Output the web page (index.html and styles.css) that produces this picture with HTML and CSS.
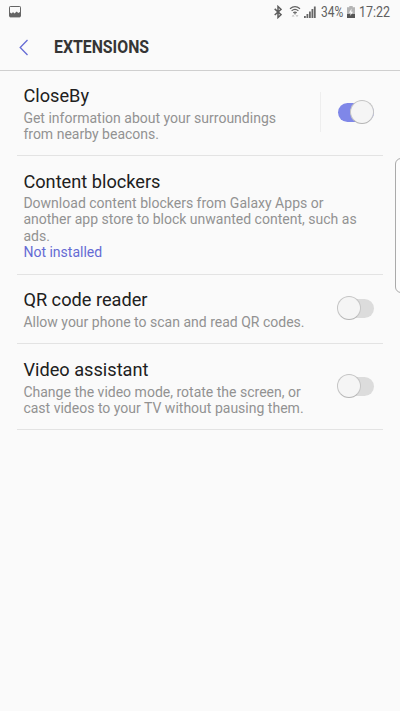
FILE: index.html
```html
<!DOCTYPE html>
<html lang="en">
<head>
<meta charset="utf-8">
<title>Extensions</title>
<link rel="stylesheet" href="styles.css">
</head>
<body>
<div class="status">
  <svg class="picture" width="12" height="12" viewBox="0 0 12 12"><rect x=".5" y=".5" width="11" height="10.4" rx=".7" fill="none" stroke="#656565"/><path d="M1 6.5L2.8 7.5 4 6l1.4 1.4L7.8 5.5l1.4 1.4L11 6v5H1z" fill="#656565"/></svg>
  <div class="indicators">
    <svg class="bluetooth" width="8" height="14" viewBox="0 0 8 14"><path d="M.7 3.9l6.3 5.8L4 12.5v-11l3 2.8L.7 10" fill="none" stroke="#5d5d5d" stroke-width="1.5"/></svg>
    <svg class="wifi" width="12" height="14" viewBox="0 0 12 14"><g fill="none" stroke="#626262" stroke-width="1.2"><path d="M1 3.8q5-4.4 10 0M2.6 5.9q3.4-3 6.8 0M4.3 7.8q1.7-1.4 3.4 0"/></g><circle cx="6" cy="8.8" r=".8" fill="#626262"/><path d="M2.6 11.6L4.1 9.8l1.5 1.8zM6.5 10.3h3L8 12z" fill="#bbb"/></svg>
    <svg class="signal" width="12" height="12" viewBox="0 0 12 12"><path d="M0 10h1.8v2H0zM2.5 8h1.8v4H2.5zM5 5.5h1.8V12H5zM7.5 3h1.8v9H7.5zM9.9.5h1.8V12H9.9z" fill="#666"/></svg>
    <span class="percent">34%</span>
    <svg class="battery" width="8" height="12" viewBox="0 0 8 12"><path d="M2.3 0h3.4v1.2H8V12H0V1.2h2.3z" fill="#b4b4b4"/><path d="M0 8h8v4H0z" fill="#555"/><path d="M4.5 2.5L2 6.8h1.7L3.2 10 6 5.8H4.3z" fill="#fafafa"/></svg>
    <span class="clock">17:22</span>
  </div>
</div>
<header class="header">
  <svg class="back" width="10" height="17" viewBox="0 0 10 17"><path d="M8.5 1L1.2 8.5 8.5 16" fill="none" stroke="#656bd4" stroke-width="1.3"/></svg>
  <h1>EXTENSIONS</h1>
</header>
<main class="list">
  <section class="row first">
    <div class="copy"><h2>CloseBy</h2><p>Get information about your surroundings<br>from nearby beacons.</p></div>
    <div class="control divided"><span class="switch on"></span></div>
  </section>
  <section class="row second">
    <div class="copy"><h2>Content blockers</h2><p>Download content blockers from Galaxy Apps or<br>another app store to block unwanted content, such as<br>ads.</p><p class="state">Not installed</p></div>
  </section>
  <section class="row third">
    <div class="copy"><h2>QR code reader</h2><p>Allow your phone to scan and read QR codes.</p></div>
    <div class="control"><span class="switch"></span></div>
  </section>
  <section class="row fourth">
    <div class="copy"><h2>Video assistant</h2><p>Change the video mode, rotate the screen, or<br>cast videos to your TV without pausing them.</p></div>
    <div class="control"><span class="switch"></span></div>
  </section>
</main>
<div class="edge"></div>
</body>
</html>
```
FILE: styles.css
```css
* { box-sizing: border-box; }
html, body { height: 100%; }
body { margin: 0; background: #fafafa; font-family: Roboto, sans-serif; color: #202020; overflow: hidden; }
h1, h2, p { margin: 0; }
svg { display: block; flex: none; }
.status { height: 24px; display: flex; justify-content: space-between; padding: 0 10px 0 9px; }
.picture { margin-top: 6px; }
.indicators { display: flex; color: #606060; font-size: 14px; line-height: 25px; white-space: nowrap; }
.bluetooth { margin: 5px 7px 0 0; }
.wifi { margin: 5px 3px 0 0; }
.signal { margin: 6px 5px 0 0; }
.percent, .clock { flex: none; transform-origin: left center; }
.percent { width: 23px; transform: scaleX(.86); }
.battery { margin: 6px 4px 0 3px; }
.clock { width: 31px; transform: scaleX(.89); }
.header { height: 47px; border-bottom: 1px solid #cfcfcf; display: flex; align-items: center; padding-left: 19px; }
.header h1 { margin-left: 25px; font-size: 18px; line-height: 24px; font-weight: 700; color: #353535; transform: scaleX(.88); transform-origin: left center; }
.list { padding: 0 17px; }
.row { height: 85px; border-bottom: 1px solid #e3e3e3; display: flex; padding: 14px 9px 0 6.4px; }
.second { height: 119px; padding-top: 15px; }
.third { height: 69px; }
.fourth { height: 86px; padding-top: 15px; }
.copy { flex: 1; white-space: nowrap; }
h2 { font-size: 18.2px; line-height: 22px; font-weight: 400; }
p { font-size: 14.02px; line-height: 16.3px; color: #929292; }
h2 + p { margin-top: 2px; }
.first h2 + p, .third h2 + p, .fourth h2 + p { margin-top: 3px; line-height: 16px; }
.state { color: #656bd4; }
.control { width: 54px; height: 40px; flex: none; display: flex; align-items: center; justify-content: flex-end; }
.first .control { margin-top: 7px; }
.divided { border-left: 1px solid #eee; }
.third .control, .fourth .control { height: 22px; margin-top: 8px; }
.fourth .control { margin-top: 16px; }
.switch { width: 36px; height: 19px; border-radius: 10px; background: #dcdcdc; display: flex; align-items: center; }
.switch::before { content: ""; width: 22px; height: 22px; flex: none; margin-left: -1px; border-radius: 50%; background: #f5f5f5; border: 1px solid #c5c5c5; border-bottom-color: #b5b5b5; }
.on { background: #7f87e8; justify-content: flex-end; }
.edge { position: absolute; left: 395px; top: 158px; width: 12px; height: 135px; border: 1px solid #aaa; border-radius: 7px; background: #fcfcfc; }
```
